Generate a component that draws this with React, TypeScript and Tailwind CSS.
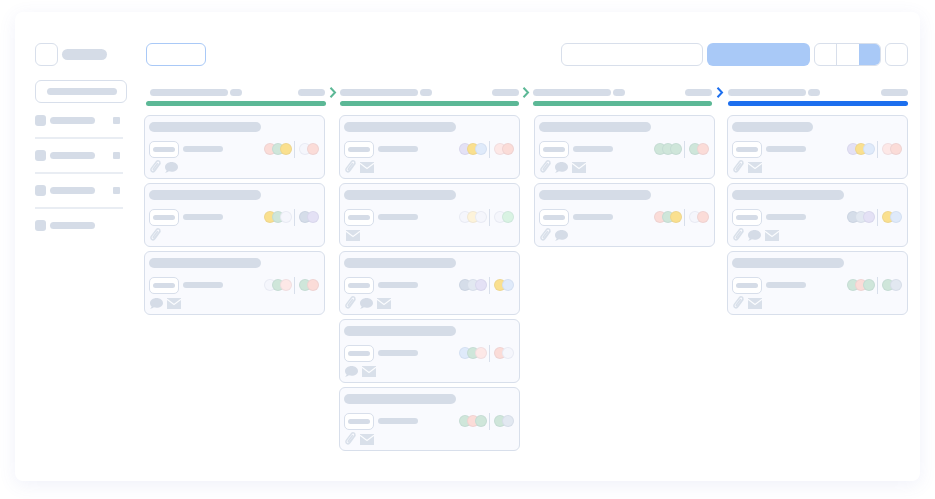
import React from "react";

const C: Record<string, string> = {
  p: "bg-[#fbdcd8]",
  g: "bg-[#cfe6da]",
  y: "bg-[#fae08f]",
  w: "bg-[#f5f6fc]",
  s: "bg-[#d5dde9]",
  v: "bg-[#e4e1f5]",
  b: "bg-[#dfeafa]",
  c: "bg-[#fdf3da]",
  m: "bg-[#d9f3e3]",
  l: "bg-[#fde8e7]",
  t: "bg-[#e2e8f1]",
};

function Clip() {
  return (
    <svg width="11" height="13" viewBox="0 0 11 13" fill="none" stroke="#d9e0ea" strokeWidth="1.5" strokeLinecap="round" className="-mt-px">
      <path d="M10 3.600 5 10.600c-.9 1.200-2.200 1.500-3.200.8-1-.7-1.200-2.100-.3-3.300L6.400 1.800C7.100.9 8.200.6 9.100 1.200c.9.6 1 1.800.3 2.700L4.900 9.700c-.4.500-.9.600-1.300.3-.4-.3-.5-.8-.1-1.300l4-5.200" />
    </svg>
  );
}

function Chat() {
  return (
    <svg width="13" height="11" viewBox="0 0 13 11">
      <path d="M6.600 0C10.100 0 13 2.200 13 4.900s-2.900 4.900-6.400 4.900c-1 0-1.900-.2-2.700-.5C3 10.100 1.500 10.700 0 10.800c.8-.6 1.400-1.500 1.600-2.400C.6 7.500 0 6.300 0 4.900 0 2.200 3 0 6.600 0Z" fill="#d5dce7" />
    </svg>
  );
}

function Mail({ first }: { first?: boolean }) {
  return (
    <svg width="14" height="11" viewBox="0 0 14 11" className={first ? "ml-px" : ""}>
      <rect width="14" height="11" fill="#d9e0ea" />
      <path d="M0 1.200 7 6.500l7-5.300" fill="none" stroke="#fbfcfe" strokeWidth="1.100" />
    </svg>
  );
}

function Circles({ list }: { list: string }) {
  return (
    <div className="mb-px flex">
      {list.split("").map((k, i) => (
        <div
          key={i}
          className={`h-3 w-3 rounded-full border border-[#3a4a7a]/[0.06] ${C[k]} ${i > 0 ? "-ml-1" : ""}`}
        />
      ))}
    </div>
  );
}

type CardData = { a: string; b: string; icons: string; short?: boolean };

function Card({ a, b, icons, short }: CardData) {
  return (
    <div className="h-16 w-[181px] rounded-md border border-[#d8dfeb] bg-[#f9fafe] pl-1 pr-[5px] pt-1.5">
      <div className={`h-2.5 rounded-full bg-[#d5dce7] ${short ? "w-[81px]" : "w-28"}`} />
      <div className="mt-[9px] flex h-[17px] items-center">
        <div className="flex h-[17px] w-[30px] items-center justify-center rounded-[5px] border border-[#d8dfeb] bg-white">
          <div className="h-[5px] w-[22px] rounded-full bg-[#d5dce7]" />
        </div>
        <div className="mb-px ml-1 h-1.5 w-10 rounded-full bg-[#d5dce7]" />
        <div className="ml-auto flex items-center">
          <Circles list={a} />
          <div className="ml-[2.500px] mr-1 h-[17px] w-px bg-[#d8dfeb]" />
          <Circles list={b} />
        </div>
      </div>
      <div className="ml-px mt-[3px] flex h-3 items-center gap-1">
        {icons.split("").map((k, i) =>
          k === "c" ? <Clip key={i} /> : k === "h" ? <Chat key={i} /> : <Mail key={i} first={icons === "m"} />
        )}
      </div>
    </div>
  );
}

const columns: CardData[][] = [
  [
    { a: "pgy", b: "wp", icons: "ch" },
    { a: "ygw", b: "sv", icons: "c" },
    { a: "wgl", b: "gp", icons: "hm" },
  ],
  [
    { a: "vyb", b: "lp", icons: "cm" },
    { a: "wcw", b: "wm", icons: "m" },
    { a: "stv", b: "yb", icons: "chm" },
    { a: "bgl", b: "pw", icons: "hm" },
    { a: "gpg", b: "gt", icons: "cm" },
  ],
  [
    { a: "ggg", b: "gp", icons: "chm" },
    { a: "pgy", b: "wp", icons: "ch" },
  ],
  [
    { a: "vyb", b: "lp", icons: "cm", short: true },
    { a: "stv", b: "yb", icons: "chm" },
    { a: "gpg", b: "gt", icons: "cm" },
  ],
];

function SideRow({ last }: { last?: boolean }) {
  return (
    <div>
      <div className="flex h-[11px] items-center">
        <div className="h-[11px] w-[11px] rounded-[3px] bg-[#d5dce7]" />
        <div className="ml-1 h-[7px] w-[45px] rounded-full bg-[#d5dce7]" />
        {!last && <div className="ml-[18px] h-[7px] w-[7px] rounded-[1px] bg-[#d5dce7]" />}
      </div>
      {!last && <div className="my-[11px] h-0.5 w-[88px] bg-[#e9edf3]" />}
    </div>
  );
}

function Head({ w, color, pad }: { w: string; color: string; pad?: boolean }) {
  return (
    <div className={w}>
      <div className={`flex h-[7px] ${pad ? "pl-1 pr-px" : ""}`}>
        <div className="h-[7px] w-[78px] rounded-full bg-[#d5dce7]" />
        <div className="ml-0.5 h-[7px] w-3 rounded-full bg-[#d5dce7]" />
        <div className="ml-auto h-[7px] w-[27px] rounded-full bg-[#d5dce7]" />
      </div>
      <div className={`mt-[5px] h-[5px] rounded-full ${color}`} />
    </div>
  );
}

function Chevron({ color, w }: { color: string; w: string }) {
  return (
    <div className={`flex -mt-0.5 h-[11px] justify-center ${w}`}>
      <svg width="8" height="11" viewBox="0 0 8 11" fill="none" stroke={color} strokeWidth="2">
        <path d="M1.500 .7 6 5.500 1.500 10.300" />
      </svg>
    </div>
  );
}

export default function App() {
  return (
    <div className="h-[499px] w-[935px] overflow-hidden bg-white pl-[15px] pt-3">
      <div className="flex h-[469px] w-[905px] rounded-lg bg-white pl-5 pt-[31px] shadow-[0_4px_18px_rgba(90,100,200,0.09)]">
        <div className="w-[92px] shrink-0">
          <div className="flex h-[23px] items-center gap-1">
            <div className="h-[23px] w-[23px] rounded-md border border-[#d8dfeb]" />
            <div className="h-[11px] w-[45px] rounded-full bg-[#d5dce7]" />
          </div>
          <div className="mt-3.5 flex h-[23px] items-center rounded-md border border-[#d8dfeb] pl-[11px]">
            <div className="h-[7px] w-[70px] rounded-full bg-[#d5dce7]" />
          </div>
          <div className="mt-3">
            <SideRow />
            <SideRow />
            <SideRow />
            <SideRow last />
          </div>
        </div>
        <div className="ml-[17px] w-[764px]">
          <div className="ml-0.5 flex h-[23px]">
            <div className="w-[60px] rounded-md border border-[#a9c9f7]" />
            <div className="ml-auto w-[142px] rounded-md border border-[#d8dfeb]" />
            <div className="ml-1 w-[103px] rounded-md bg-[#a9c9f7]" />
            <div className="ml-1 flex w-[67px] overflow-hidden rounded-md border border-[#d8dfeb]">
              <div className="w-[22px] border-r border-[#d8dfeb]" />
              <div className="w-[22px]" />
              <div className="flex-1 bg-[#a9c9f7]" />
            </div>
            <div className="ml-1 w-[23px] rounded-md border border-[#d8dfeb]" />
          </div>
          <div className="ml-0.5 mt-[23px] flex">
            <Head w="w-[180px]" color="bg-[#5cb896]" pad />
            <Chevron color="#5cb896" w="w-3.5" />
            <Head w="w-[179px]" color="bg-[#5cb896]" />
            <Chevron color="#5cb896" w="w-3.5" />
            <Head w="w-[179px]" color="bg-[#5cb896]" />
            <Chevron color="#1d6fee" w="w-4" />
            <Head w="w-[180px]" color="bg-[#1d6fee]" />
          </div>
          <div className="mt-[9px] flex items-start gap-3.5">
            {columns.map((cards, i) => (
              <div key={i} className={`flex flex-col gap-1 ${i === 3 ? "-ml-0.5" : ""}`}>
                {cards.map((c, j) => (
                  <Card key={j} {...c} />
                ))}
              </div>
            ))}
          </div>
        </div>
      </div>
    </div>
  );
}
